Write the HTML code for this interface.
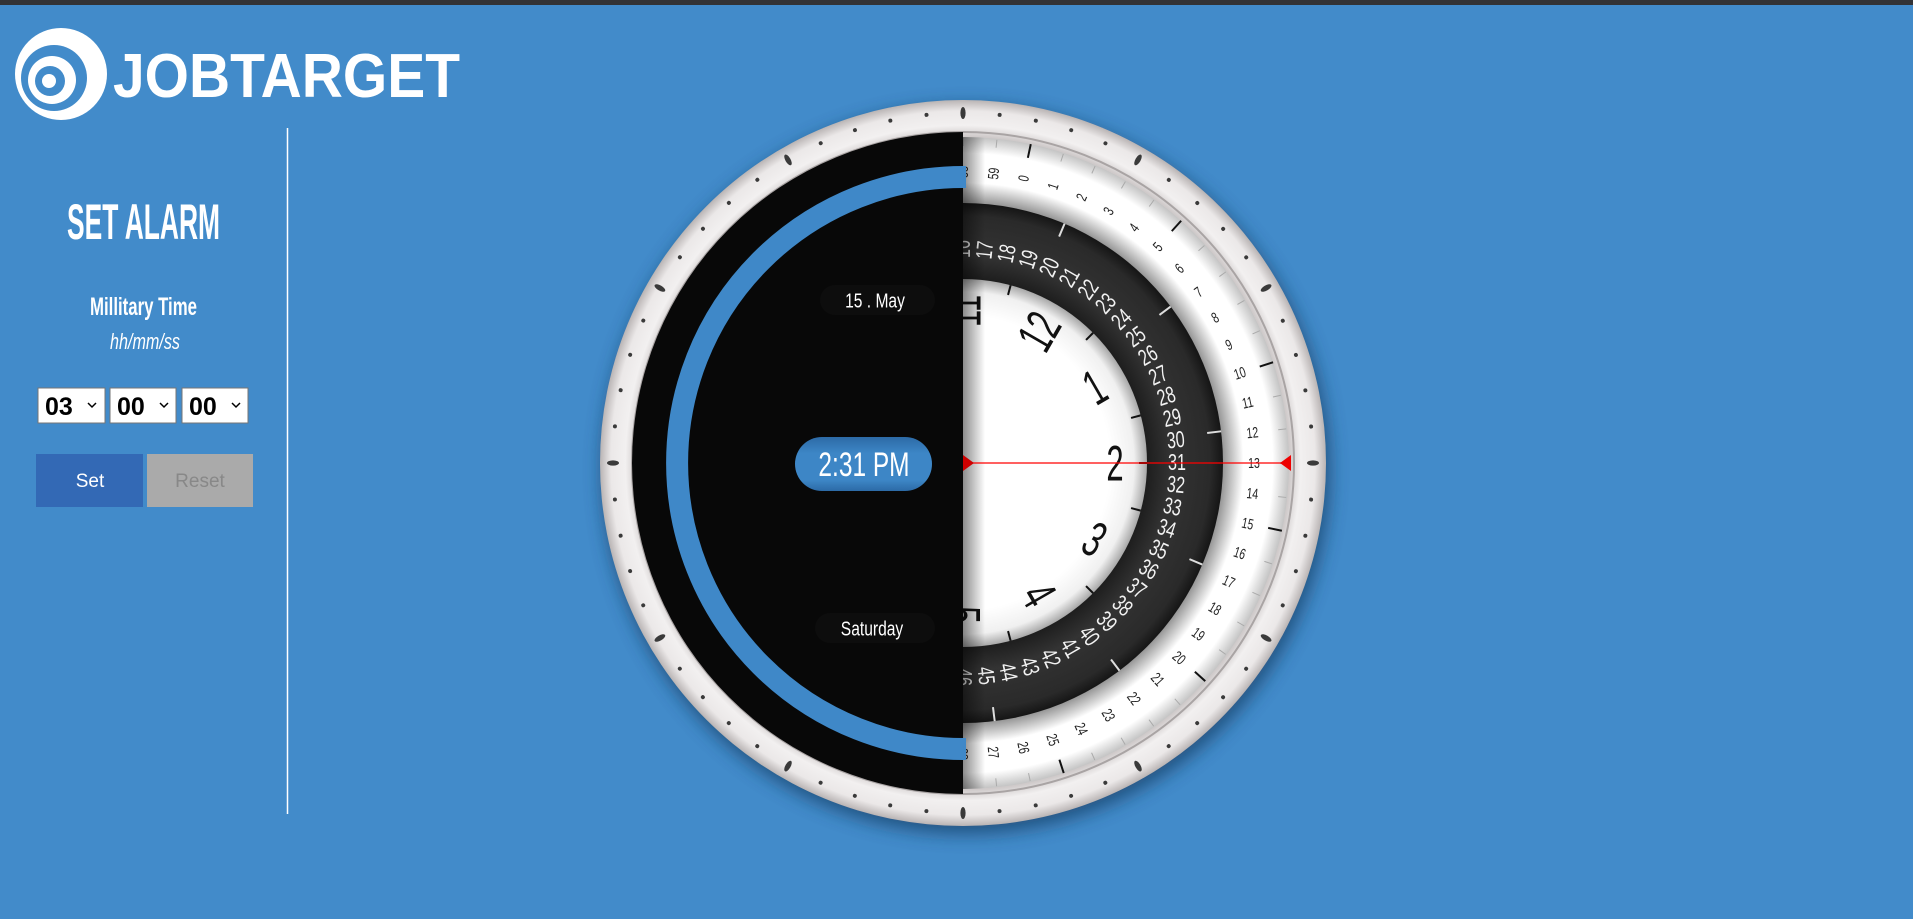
<!DOCTYPE html>
<html><head><meta charset="utf-8"><style>
html,body{margin:0;padding:0;width:1913px;height:919px;overflow:hidden;background:#428bca;}
svg{display:block}
.n{font-family:"Liberation Sans",sans-serif;text-anchor:middle;dominant-baseline:central}
</style></head><body>
<svg width="1913" height="919" viewBox="0 0 1913 919" xmlns="http://www.w3.org/2000/svg">
<defs>
<filter id="sh" x="-20%" y="-20%" width="140%" height="140%"><feGaussianBlur stdDeviation="9"/></filter>
<radialGradient id="bez" gradientUnits="userSpaceOnUse" cx="963" cy="463" r="363">
<stop offset="0.9" stop-color="#cfcaca"/><stop offset="0.93" stop-color="#f2f0f0"/><stop offset="0.97" stop-color="#ebe8e8"/><stop offset="1" stop-color="#b9b4b4"/></radialGradient>
<radialGradient id="min" gradientUnits="userSpaceOnUse" cx="963" cy="463" r="326">
<stop offset="0.79" stop-color="#8a8a8a"/><stop offset="0.86" stop-color="#fff"/><stop offset="0.95" stop-color="#fff"/><stop offset="1" stop-color="#c4c4c4"/></radialGradient>
<radialGradient id="drk" gradientUnits="userSpaceOnUse" cx="963" cy="463" r="260">
<stop offset="0.7" stop-color="#1c1c1c"/><stop offset="0.8" stop-color="#333"/><stop offset="0.95" stop-color="#2a2a2a"/><stop offset="1" stop-color="#151515"/></radialGradient>
<radialGradient id="dial" gradientUnits="userSpaceOnUse" cx="963" cy="463" r="184">
<stop offset="0.8" stop-color="#fff"/><stop offset="0.93" stop-color="#f0f0f0"/><stop offset="1" stop-color="#a8a8a8"/></radialGradient>
<linearGradient id="hs" x1="0" x2="1"><stop offset="0" stop-color="#000" stop-opacity=".45"/><stop offset="1" stop-color="#000" stop-opacity="0"/></linearGradient>
<linearGradient id="pill" x1="0" y1="0" x2="0" y2="1"><stop offset="0" stop-color="#2c6aa6"/><stop offset=".3" stop-color="#3d86c6"/><stop offset=".8" stop-color="#3d86c6"/><stop offset="1" stop-color="#2c6aa6"/></linearGradient>
<clipPath id="cr"><circle cx="963" cy="463" r="326"/></clipPath>
</defs>
<rect x="0" y="0" width="1913" height="5" fill="#333336"/>
<!-- logo -->
<circle cx="61" cy="74" r="46" fill="#fff"/>
<circle cx="54" cy="78" r="33" fill="#428bca"/>
<circle cx="52" cy="80" r="24" fill="#fff"/>
<circle cx="50" cy="81" r="15" fill="#428bca"/>
<circle cx="49" cy="81" r="7" fill="#fff"/>
<text x="113" y="97" font-family="Liberation Sans,sans-serif" font-weight="bold" font-size="62" fill="#fff" textLength="347" lengthAdjust="spacingAndGlyphs">JOBTARGET</text>
<line x1="287.5" y1="128" x2="287.5" y2="814" stroke="#fff" stroke-width="1.5"/>
<text x="67" y="239" font-family="Liberation Sans,sans-serif" font-weight="bold" font-size="50" fill="#fff" textLength="153" lengthAdjust="spacingAndGlyphs">SET ALARM</text>
<text x="90" y="315" font-family="Liberation Sans,sans-serif" font-weight="bold" font-size="25" fill="#fff" textLength="107" lengthAdjust="spacingAndGlyphs">Millitary Time</text>
<text x="110" y="349" font-family="Liberation Sans,sans-serif" font-style="italic" font-size="22" fill="#fff" textLength="70" lengthAdjust="spacingAndGlyphs">hh/mm/ss</text>
<g font-family="Liberation Sans,sans-serif" font-weight="bold" font-size="25">
<rect x="38" y="388" width="67" height="35" fill="#fff" stroke="#767676"/><text x="45" y="415">03</text><path d="M88 403 l4 4 l4 -4" fill="none" stroke="#000" stroke-width="1.5"/>
<rect x="110" y="388" width="66" height="35" fill="#fff" stroke="#767676"/><text x="117" y="415">00</text><path d="M160 403 l4 4 l4 -4" fill="none" stroke="#000" stroke-width="1.5"/>
<rect x="182" y="388" width="66" height="35" fill="#fff" stroke="#767676"/><text x="189" y="415">00</text><path d="M232 403 l4 4 l4 -4" fill="none" stroke="#000" stroke-width="1.5"/>
</g>
<rect x="36" y="454" width="107" height="53" fill="#3369b5"/>
<text x="90" y="487" text-anchor="middle" font-family="Liberation Sans,sans-serif" font-size="19" fill="#fff">Set</text>
<rect x="147" y="454" width="106" height="53" fill="#aaa"/>
<text x="200" y="487" text-anchor="middle" font-family="Liberation Sans,sans-serif" font-size="19" fill="#888">Reset</text>

<!-- clock -->
<circle cx="966" cy="470" r="364" fill="#163a60" opacity=".7" filter="url(#sh)"/>
<circle cx="963" cy="463" r="363" fill="url(#bez)"/>
<circle cx="963" cy="463" r="350" fill="none" stroke="#3a3a3a" stroke-width="4" stroke-linecap="round" stroke-dasharray="0.01 36.64"/>
<g transform="translate(963 463)" fill="#3a3a3a">
<ellipse cx="0" cy="-350" rx="2.6" ry="6"/><ellipse cx="0" cy="-350" rx="2.6" ry="6" transform="rotate(30)"/><ellipse cx="0" cy="-350" rx="2.6" ry="6" transform="rotate(60)"/><ellipse cx="0" cy="-350" rx="2.6" ry="6" transform="rotate(90)"/><ellipse cx="0" cy="-350" rx="2.6" ry="6" transform="rotate(120)"/><ellipse cx="0" cy="-350" rx="2.6" ry="6" transform="rotate(150)"/><ellipse cx="0" cy="-350" rx="2.6" ry="6" transform="rotate(180)"/><ellipse cx="0" cy="-350" rx="2.6" ry="6" transform="rotate(210)"/><ellipse cx="0" cy="-350" rx="2.6" ry="6" transform="rotate(240)"/><ellipse cx="0" cy="-350" rx="2.6" ry="6" transform="rotate(270)"/><ellipse cx="0" cy="-350" rx="2.6" ry="6" transform="rotate(300)"/><ellipse cx="0" cy="-350" rx="2.6" ry="6" transform="rotate(330)"/>
</g>
<circle cx="963" cy="463" r="331" fill="none" stroke="#a9a4a4" stroke-width="2"/>
<circle cx="963" cy="463" r="326" fill="url(#min)"/>
<circle cx="963" cy="463" r="321" fill="none" stroke="#aaa" stroke-width="8" stroke-dasharray="1 32.6"/>
<g transform="translate(963 463)" stroke="#111" stroke-width="2">
<line x1="0" y1="-326" x2="0" y2="-312" transform="rotate(12)"/><line x1="0" y1="-326" x2="0" y2="-312" transform="rotate(42)"/><line x1="0" y1="-326" x2="0" y2="-312" transform="rotate(72)"/><line x1="0" y1="-326" x2="0" y2="-312" transform="rotate(102)"/><line x1="0" y1="-326" x2="0" y2="-312" transform="rotate(132)"/><line x1="0" y1="-326" x2="0" y2="-312" transform="rotate(162)"/>
</g>
<g transform="translate(963 463)" class="n" font-size="15" fill="#222">
<text transform="rotate(0) translate(0 -291) rotate(-90) scale(.7 1)">58</text>
<text transform="rotate(6) translate(0 -291) rotate(-90) scale(.7 1)">59</text>
<text transform="rotate(12) translate(0 -291) rotate(-90) scale(.7 1)">0</text>
<text transform="rotate(18) translate(0 -291) rotate(-90) scale(.7 1)">1</text>
<text transform="rotate(24) translate(0 -291) rotate(-90) scale(.7 1)">2</text>
<text transform="rotate(30) translate(0 -291) rotate(-90) scale(.7 1)">3</text>
<text transform="rotate(36) translate(0 -291) rotate(-90) scale(.7 1)">4</text>
<text transform="rotate(42) translate(0 -291) rotate(-90) scale(.7 1)">5</text>
<text transform="rotate(48) translate(0 -291) rotate(-90) scale(.7 1)">6</text>
<text transform="rotate(54) translate(0 -291) rotate(-90) scale(.7 1)">7</text>
<text transform="rotate(60) translate(0 -291) rotate(-90) scale(.7 1)">8</text>
<text transform="rotate(66) translate(0 -291) rotate(-90) scale(.7 1)">9</text>
<text transform="rotate(72) translate(0 -291) rotate(-90) scale(.7 1)">10</text>
<text transform="rotate(78) translate(0 -291) rotate(-90) scale(.7 1)">11</text>
<text transform="rotate(84) translate(0 -291) rotate(-90) scale(.7 1)">12</text>
<text transform="rotate(90) translate(0 -291) rotate(-90) scale(.7 1)">13</text>
<text transform="rotate(96) translate(0 -291) rotate(-90) scale(.7 1)">14</text>
<text transform="rotate(102) translate(0 -291) rotate(-90) scale(.7 1)">15</text>
<text transform="rotate(108) translate(0 -291) rotate(-90) scale(.7 1)">16</text>
<text transform="rotate(114) translate(0 -291) rotate(-90) scale(.7 1)">17</text>
<text transform="rotate(120) translate(0 -291) rotate(-90) scale(.7 1)">18</text>
<text transform="rotate(126) translate(0 -291) rotate(-90) scale(.7 1)">19</text>
<text transform="rotate(132) translate(0 -291) rotate(-90) scale(.7 1)">20</text>
<text transform="rotate(138) translate(0 -291) rotate(-90) scale(.7 1)">21</text>
<text transform="rotate(144) translate(0 -291) rotate(-90) scale(.7 1)">22</text>
<text transform="rotate(150) translate(0 -291) rotate(-90) scale(.7 1)">23</text>
<text transform="rotate(156) translate(0 -291) rotate(-90) scale(.7 1)">24</text>
<text transform="rotate(162) translate(0 -291) rotate(-90) scale(.7 1)">25</text>
<text transform="rotate(168) translate(0 -291) rotate(-90) scale(.7 1)">26</text>
<text transform="rotate(174) translate(0 -291) rotate(-90) scale(.7 1)">27</text>
<text transform="rotate(180) translate(0 -291) rotate(-90) scale(.7 1)">28</text>
</g>
<circle cx="963" cy="463" r="260" fill="url(#drk)"/>
<g transform="translate(963 463)" stroke="#ddd" stroke-width="2">
<line x1="0" y1="-260" x2="0" y2="-246" transform="rotate(23)"/><line x1="0" y1="-260" x2="0" y2="-246" transform="rotate(53)"/><line x1="0" y1="-260" x2="0" y2="-246" transform="rotate(83)"/><line x1="0" y1="-260" x2="0" y2="-246" transform="rotate(113)"/><line x1="0" y1="-260" x2="0" y2="-246" transform="rotate(143)"/><line x1="0" y1="-260" x2="0" y2="-246" transform="rotate(173)"/>
</g>
<g transform="translate(963 463)" class="n" font-size="23" fill="#f2f2f2">
<text transform="rotate(0) translate(0 -214) rotate(-90) scale(.7 1)">16</text>
<text transform="rotate(6) translate(0 -214) rotate(-90) scale(.7 1)">17</text>
<text transform="rotate(12) translate(0 -214) rotate(-90) scale(.7 1)">18</text>
<text transform="rotate(18) translate(0 -214) rotate(-90) scale(.7 1)">19</text>
<text transform="rotate(24) translate(0 -214) rotate(-90) scale(.7 1)">20</text>
<text transform="rotate(30) translate(0 -214) rotate(-90) scale(.7 1)">21</text>
<text transform="rotate(36) translate(0 -214) rotate(-90) scale(.7 1)">22</text>
<text transform="rotate(42) translate(0 -214) rotate(-90) scale(.7 1)">23</text>
<text transform="rotate(48) translate(0 -214) rotate(-90) scale(.7 1)">24</text>
<text transform="rotate(54) translate(0 -214) rotate(-90) scale(.7 1)">25</text>
<text transform="rotate(60) translate(0 -214) rotate(-90) scale(.7 1)">26</text>
<text transform="rotate(66) translate(0 -214) rotate(-90) scale(.7 1)">27</text>
<text transform="rotate(72) translate(0 -214) rotate(-90) scale(.7 1)">28</text>
<text transform="rotate(78) translate(0 -214) rotate(-90) scale(.7 1)">29</text>
<text transform="rotate(84) translate(0 -214) rotate(-90) scale(.7 1)">30</text>
<text transform="rotate(90) translate(0 -214) rotate(-90) scale(.7 1)">31</text>
<text transform="rotate(96) translate(0 -214) rotate(-90) scale(.7 1)">32</text>
<text transform="rotate(102) translate(0 -214) rotate(-90) scale(.7 1)">33</text>
<text transform="rotate(108) translate(0 -214) rotate(-90) scale(.7 1)">34</text>
<text transform="rotate(114) translate(0 -214) rotate(-90) scale(.7 1)">35</text>
<text transform="rotate(120) translate(0 -214) rotate(-90) scale(.7 1)">36</text>
<text transform="rotate(126) translate(0 -214) rotate(-90) scale(.7 1)">37</text>
<text transform="rotate(132) translate(0 -214) rotate(-90) scale(.7 1)">38</text>
<text transform="rotate(138) translate(0 -214) rotate(-90) scale(.7 1)">39</text>
<text transform="rotate(144) translate(0 -214) rotate(-90) scale(.7 1)">40</text>
<text transform="rotate(150) translate(0 -214) rotate(-90) scale(.7 1)">41</text>
<text transform="rotate(156) translate(0 -214) rotate(-90) scale(.7 1)">42</text>
<text transform="rotate(162) translate(0 -214) rotate(-90) scale(.7 1)">43</text>
<text transform="rotate(168) translate(0 -214) rotate(-90) scale(.7 1)">44</text>
<text transform="rotate(174) translate(0 -214) rotate(-90) scale(.7 1)">45</text>
<text transform="rotate(180) translate(0 -214) rotate(-90) scale(.7 1)">46</text>
</g>
<circle cx="963" cy="463" r="184" fill="url(#dial)"/>
<g transform="translate(963 463)" stroke="#111" stroke-width="2">
<line x1="0" y1="-184" x2="0" y2="-174" transform="rotate(15)"/><line x1="0" y1="-184" x2="0" y2="-174" transform="rotate(45)"/><line x1="0" y1="-184" x2="0" y2="-174" transform="rotate(75)"/><line x1="0" y1="-184" x2="0" y2="-174" transform="rotate(105)"/><line x1="0" y1="-184" x2="0" y2="-174" transform="rotate(135)"/><line x1="0" y1="-184" x2="0" y2="-174" transform="rotate(165)"/>
<line x1="0" y1="-184" x2="0" y2="-176" transform="rotate(90)"/>
</g>
<g transform="translate(963 463)" class="n" font-size="50" fill="#111">
<text transform="rotate(0) translate(0 -152) rotate(-90) scale(.62 1)">11</text>
<text transform="rotate(30) translate(0 -152) rotate(-90) scale(.62 1)">12</text>
<text transform="rotate(60) translate(0 -152) rotate(-90) scale(.62 1)">1</text>
<text transform="rotate(90) translate(0 -152) rotate(-90) scale(.62 1)">2</text>
<text transform="rotate(120) translate(0 -152) rotate(-90) scale(.62 1)">3</text>
<text transform="rotate(150) translate(0 -152) rotate(-90) scale(.62 1)">4</text>
<text transform="rotate(180) translate(0 -152) rotate(-90) scale(.62 1)">5</text>
</g>
<rect x="963" y="137" width="22" height="652" fill="url(#hs)" clip-path="url(#cr)"/>
<line x1="963" y1="463" x2="1289" y2="463" stroke="#f00" stroke-width="1.3"/>
<polygon points="1291,455 1280,463 1291,471" fill="#e00"/>
<!-- left half -->
<path d="M963 132 A331 331 0 0 0 963 794 Z" fill="#080808"/>
<polygon points="963,455 974,463 963,471" fill="#c00"/>
<path d="M966 177 L963 177 A286 286 0 0 0 963 749 L966 749" fill="none" stroke="#3f88c8" stroke-width="22"/>
<rect x="820" y="285" width="115" height="30" rx="15" fill="#0d0d0d"/>
<text class="n" font-size="20" fill="#fff" transform="translate(875 301) scale(.78 1)">15 . May</text>
<rect x="815" y="613" width="120" height="30" rx="15" fill="#0d0d0d"/>
<text class="n" font-size="20" fill="#fff" transform="translate(872 629) scale(.78 1)">Saturday</text>
<rect x="795" y="437" width="137" height="54" rx="27" fill="url(#pill)"/>
<text class="n" font-size="34" fill="#fff" transform="translate(864 465) scale(.72 1)">2:31 PM</text>
</svg>
</body></html>
